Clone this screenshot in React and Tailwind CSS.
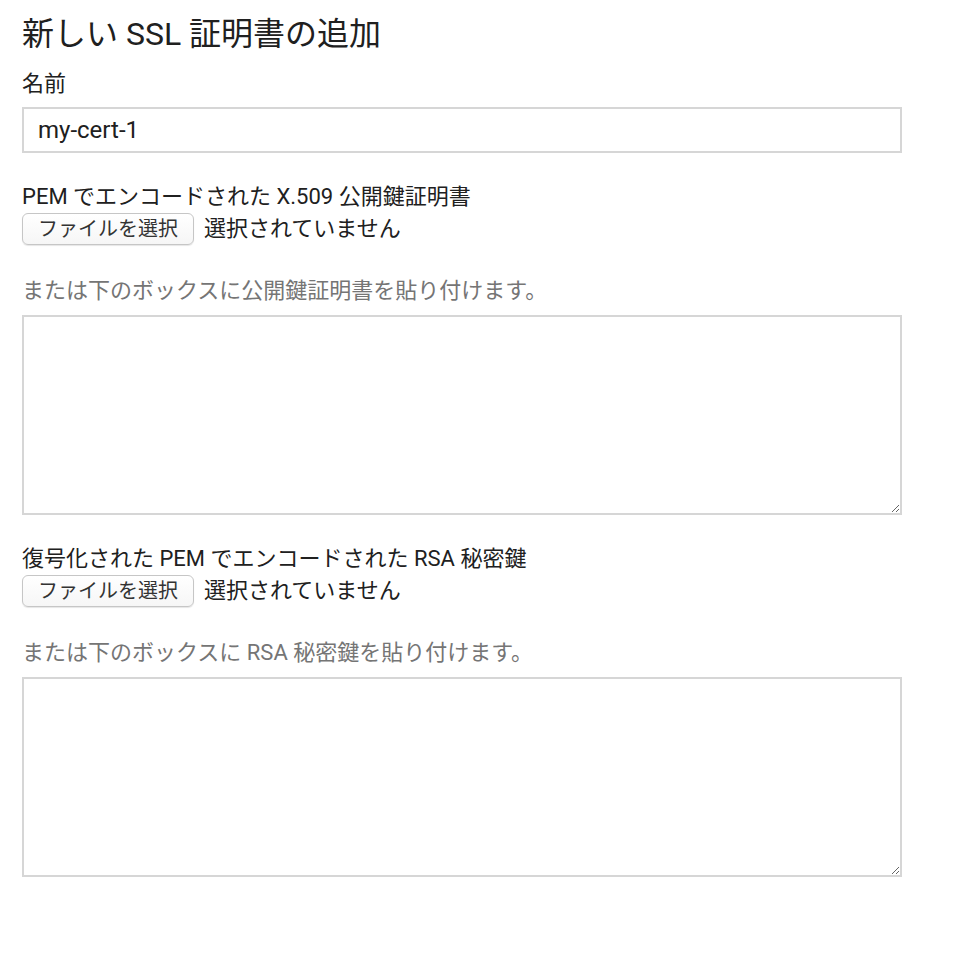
const font = { fontFamily: 'Roboto, "Noto Sans CJK JP", sans-serif' };

function FileField({ label, hint }) {
  return (
    <div className="mt-[30px]">
      <div className="text-[22px] leading-[28px] text-[#202020]">{label}</div>
      <div className="mt-[2px] flex items-center">
        <button
          type="button"
          className="h-[32px] rounded-[6px] border border-[#c6c6c6] bg-gradient-to-b from-white to-[#f6f6f6] px-[15px] text-[20px] leading-[28px] text-[#333] shadow-[0_1px_1px_rgba(0,0,0,0.1)]">
          ファイルを選択
        </button>
        <span className="ml-[10px] text-[22px] leading-[28px] text-[#202020]">選択されていません</span>
      </div>
      <div className="mt-[32px] text-[22px] leading-[28px] text-[#757575]">{hint}</div>
      <textarea className="mt-[10px] block h-[200px] w-full resize-y border-2 border-[#d6d6d6] bg-white outline-none" />
    </div>
  );
}

export default function App() {
  return (
    <div className="min-h-[978px] w-[970px] bg-white" style={font}>
      <div className="w-[880px] pl-[22px] pt-[16px] box-content">
        <h1 className="text-[32px] font-normal leading-[36px] text-[#202020]">新しい SSL 証明書の追加</h1>
        <div className="mt-[18px] text-[22px] leading-[28px] text-[#202020]">名前</div>
        <input
          defaultValue="my-cert-1"
          className="mt-[9px] block h-[46px] w-full border-2 border-[#d6d6d6] bg-white px-[14px] text-[24px] text-[#202020] outline-none"
        />
        <FileField
          label="PEM でエンコードされた X.509 公開鍵証明書"
          hint="または下のボックスに公開鍵証明書を貼り付けます。"
        />
        <FileField
          label="復号化された PEM でエンコードされた RSA 秘密鍵"
          hint="または下のボックスに RSA 秘密鍵を貼り付けます。"
        />
      </div>
    </div>
  );
}
